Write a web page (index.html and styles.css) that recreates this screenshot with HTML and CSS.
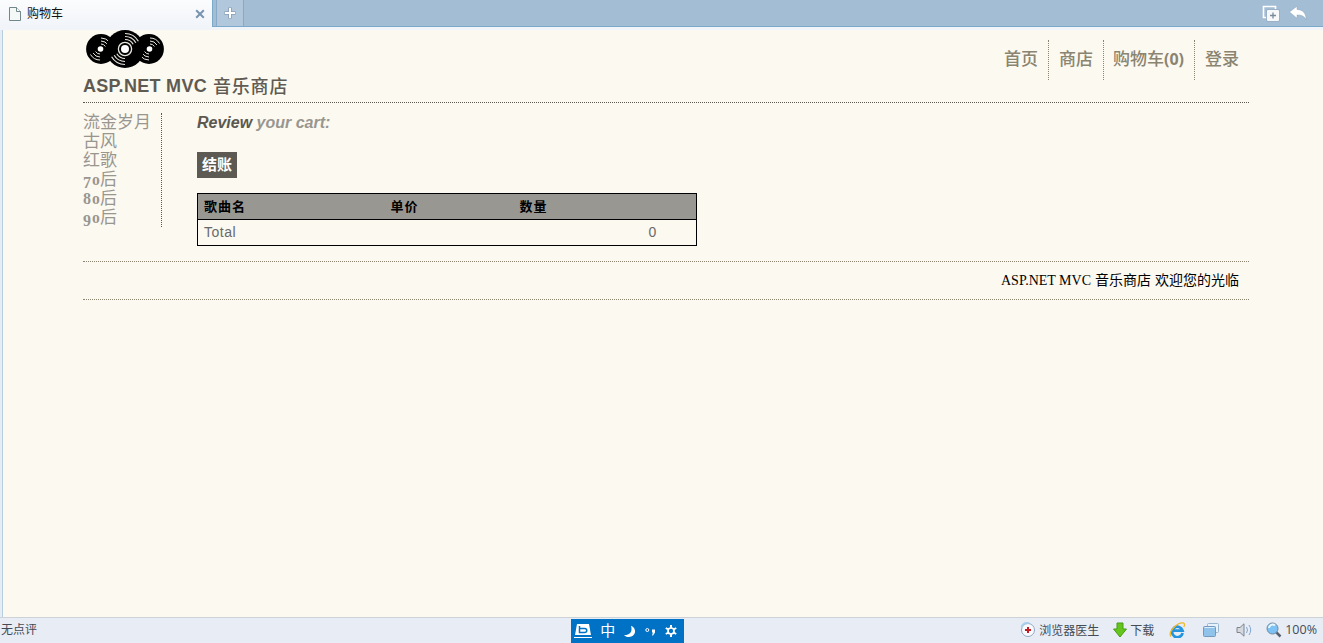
FILE: index.html
```html
<!DOCTYPE html>
<html lang="zh-CN">
<head>
<meta charset="utf-8">
<title>购物车</title>
<link rel="stylesheet" href="styles.css">
</head>
<body>
<div class="window">
  <div class="tabstrip">
    <div class="tab">
      <svg class="tab-icon" width="14" height="16" viewBox="0 0 14 16"><path d="M1.500 1.500h7l4 4v9h-11z" fill="#f4f8f7" stroke="#71878a"/><path d="M8.500 1.500v4h4" fill="#fff" stroke="#71878a"/></svg>
      <span class="tab-title">购物车</span>
      <svg class="tab-close" width="10" height="10" viewBox="0 0 10 10"><path d="M1.200 1.200l7.600 7.600M8.800 1.200L1.200 8.800" stroke="#7894b0" stroke-width="2"/></svg>
    </div>
    <div class="new-tab"><svg width="12" height="12" viewBox="0 0 12 12"><path d="M6 .5v11M.5 6h11" stroke="#8b9fb4" stroke-width="3.600"/><path d="M6 1v10M1 6h10" stroke="#fff" stroke-width="2"/></svg></div>
    <div class="strip-actions">
      <svg width="18" height="17" viewBox="0 0 18 17"><path d="M4 12.500H1.500v-11h12V4" fill="none" stroke="#fff" stroke-width="1.600"/><rect x="4.500" y="4.500" width="13" height="12" rx="1.500" fill="#f6f8fa" stroke="#7896b2" stroke-width=".6"/><path d="M11 7.500v6M8 10.500h6" stroke="#788b9c" stroke-width="1.300"/></svg>
      <svg width="18" height="14" viewBox="0 0 18 14"><path d="M.5 6L8 .3v3.200c5.500 0 9 3.500 9.200 10-2-3.500-5-4.800-9.200-4.600v3.300z" fill="#fff" stroke="#7f9bb5" stroke-width=".4"/></svg>
    </div>
  </div>
  <div class="toolbar-edge"></div>
  <div class="viewport">
    <div class="page">
      <header class="header">
        <div class="brand">
          <svg class="logo" width="80" height="40" viewBox="0 0 80 40">
            <g fill="none" stroke="#e9e7df" stroke-width="1">
              <circle cx="16" cy="20" r="14.900" fill="#000" stroke="none"/>
              <path d="M16 15a5 5 0 0 1 4.400 2.500M16 12a8 8 0 0 1 6.900 4M16 9a11 11 0 0 1 8.500 4M15 25a5 5 0 0 1-4.400-2.500M15 28a8 8 0 0 1-6.900-4M15 31a11 11 0 0 1-9.500-5.500"/>
              <circle cx="64" cy="20" r="14.900" fill="#000" stroke="none"/>
              <path d="M65 15a5 5 0 0 1 4.400 2.500M65 12a8 8 0 0 1 6.900 4M65 9a11 11 0 0 1 9.500 5.500M64 25a5 5 0 0 1-4.400-2.500M64 28a8 8 0 0 1-6.900-4M64 31a11 11 0 0 1-8.500-4"/>
              <circle cx="40" cy="20" r="19" fill="#000" stroke="none"/>
              <circle cx="40" cy="20" r="6.600" stroke-width="1.300"/>
              <path stroke-width="1.200" d="M40 10.500a9.500 9.500 0 0 1 8.200 4.700M40 7.500a12.500 12.500 0 0 1 10.800 6.200M40 4.500a15.500 15.500 0 0 1 13.400 7.700M40 29.500a9.500 9.500 0 0 1-8.200-4.700M40 32.500a12.500 12.500 0 0 1-10.800-6.200M40 35.500a15.500 15.500 0 0 1-13.400-7.700"/>
            </g>
            <g fill="#fff"><circle cx="15.500" cy="20" r="2.800"/><circle cx="64.500" cy="20" r="2.800"/><circle cx="40" cy="20" r="4"/></g>
          </svg>
          <h1 class="site-title"><span class="latin">ASP.NET MVC</span><span class="site-cn">音乐商店</span></h1>
        </div>
        <nav class="nav">
          <a class="nav-item">首页</a><a class="nav-item">商店</a><a class="nav-item nav-cart">购物车<span class="count">(0)</span></a><a class="nav-item nav-last">登录</a>
        </nav>
      </header>
      <div class="main">
        <ul class="categories">
          <li>流金岁月</li><li>古风</li><li>红歌</li>
          <li><span class="old low">7</span><span class="old zero">0</span>后</li>
          <li><span class="old">8</span><span class="old zero">0</span>后</li>
          <li><span class="old low">9</span><span class="old zero">0</span>后</li>
        </ul>
        <section class="cart">
          <h3 class="cart-title"><em>Review</em> your cart:</h3>
          <a class="checkout">结账</a>
          <table class="cart-table">
            <thead><tr><th class="col-name">歌曲名</th><th class="col-price">单价</th><th class="col-count">数量</th><th></th></tr></thead>
            <tbody><tr><td class="total">Total</td><td></td><td></td><td>0</td></tr></tbody>
          </table>
        </section>
      </div>
      <footer class="footer"><span class="footer-latin">ASP.NET MVC</span><span class="footer-cn">音乐商店</span><span class="footer-cn">欢迎您的光临</span></footer>
    </div>
  </div>
  <div class="statusbar">
    <div class="status-left">无点评</div>
    <div class="ime">
      <svg width="18" height="16" viewBox="0 0 18 16"><path d="M3 1h12l2 11H1z" fill="#fff"/><path d="M0 14.500h18" stroke="#fff"/><path d="M5.500 3v6.500h5c3 0 3-4 0-4h-5" fill="none" stroke="#0072c6" stroke-width="1.500"/></svg>
      <span class="ime-lang">中</span>
      <svg width="13" height="13" viewBox="0 0 13 13"><path d="M8 .8c5 2 5.500 8 1 10.500-3 1.500-6.500.6-8-1.300 6 .5 8.800-3.500 7-9.200z" fill="#fff"/></svg>
      <svg width="11" height="9" viewBox="0 0 11 9"><circle cx="2.300" cy="3" r="1.500" fill="none" stroke="#fff"/><path d="M7 2.500h3v3L8 8.500H7l.9-3H7z" fill="#fff"/></svg>
      <svg width="14" height="14" viewBox="0 0 14 14"><path d="M7 1v12M1.800 4l10.400 6M12.200 4L1.800 10" stroke="#fff" stroke-width="2"/><circle cx="7" cy="7" r="3" fill="#0072c6" stroke="#fff" stroke-width="1.700"/></svg>
    </div>
    <div class="status-tools">
      <span class="tool doctor"><svg width="16" height="16" viewBox="0 0 16 16"><circle cx="8" cy="8" r="6.500" fill="#f7fbff" stroke="#91a9c0"/><path d="M1.500 5A7 7 0 0 1 9 1" fill="none" stroke="#a9d0ee" stroke-width="2"/><path d="M8 5v6M5 8h6" stroke="#c51d22" stroke-width="2"/></svg>浏览器医生</span>
      <span class="tool download"><svg width="14" height="16" viewBox="0 0 14 16"><path d="M4 1h6v6h3.500L7 15 .5 7H4z" fill="#66c51c" stroke="#469d14"/></svg>下载</span>
      <svg class="ie" width="17" height="16" viewBox="0 0 17 16"><path d="M13.600 11A5.300 5.300 0 1 1 13.500 8.600H4.500" fill="none" stroke="#2394dd" stroke-width="2.800"/><path d="M2 14.500C-1.500 10 9-.5 14.500 1c1.500.5 1.200 2.500.3 4" fill="none" stroke="#efb82c" stroke-width="1.300"/></svg>
      <svg class="windows" width="17" height="14" viewBox="0 0 17 14"><rect x="4.500" y=".5" width="11" height="9" rx="1" fill="#e8f2fa" stroke="#9ab6cf"/><rect x=".5" y="3.500" width="12" height="10" rx="1" fill="#8fc3ea" stroke="#7598bc"/><path d="M1.500 4.500h10" stroke="#dcecf8"/></svg>
      <svg class="sound" width="16" height="14" viewBox="0 0 16 14"><path d="M1 4.500h3l4-3.700v12.400L4 9.500H1z" fill="#d5d9df" stroke="#7e858f"/><path d="M10.500 4q2 3 0 6M13 2q3.400 5 0 10" fill="none" stroke="#7fa6d5"/></svg>
      <span class="tool zoom"><svg width="16" height="16" viewBox="0 0 16 16"><path d="M10 10l4.500 4.500" stroke="#59636f" stroke-width="2.500"/><circle cx="6.500" cy="6.500" r="5.500" fill="#7cc2f5" stroke="#73869b"/><path d="M3 6a3.600 3.600 0 0 1 6-2.500" fill="none" stroke="#e9f7ff" stroke-width="2"/></svg><span class="percent">100%</span></span>
    </div>
  </div>
</div>
</body>
</html>
```

FILE: styles.css
```css
* { box-sizing: border-box; }
body { margin: 0; font-family: "Liberation Sans", "Noto Sans CJK SC", sans-serif; }
svg { display: block; flex: none; }
.window { width: 1323px; height: 643px; display: flex; flex-direction: column; overflow: hidden; background: #fcf9f0; }

.tabstrip { height: 27px; display: flex; flex: none; background: #a3bdd4; border-bottom: 1px solid #7ca8ca; }
.tab { width: 213px; height: 27px; display: flex; align-items: center; padding: 0 7px 0 8px; background: linear-gradient(#fbfcfd, #f1f4f9); border-right: 1px solid #7ca8ca; }
.tab-title { margin: -2px 0 0 5px; font: 12px/16px "Noto Sans CJK SC", sans-serif; color: #111; flex: 1; }
.new-tab { width: 28px; height: 26px; margin-left: 3px; display: flex; align-items: center; justify-content: center; background: #b1c7dc; border: solid #89a9c4; border-width: 0 1px; }
.strip-actions { margin-left: auto; display: flex; align-items: center; gap: 9px; padding: 0 16px 0 0; }
.toolbar-edge { height: 3px; flex: none; background: #f1f5fa; }

.viewport { height: 587px; flex: none; margin-left: 2px; padding-left: 80px; border-left: 1px solid #b5cee2; box-shadow: -2px 0 #e6edf5; }
.page { width: 1166px; }
.header { height: 73px; display: flex; justify-content: space-between; border-bottom: 1px dotted #5b5850; }
.logo { margin: -1px 0 0 2px; }
.site-title { margin: 6px 0 0; height: 22px; display: flex; gap: 6px; align-items: center; font-size: 18px; line-height: 22px; color: #5f5b53; white-space: nowrap; }
.latin { letter-spacing: .3px; }
.site-cn { margin-top: -3px; font: 500 18px/22px "Noto Sans CJK SC", sans-serif; letter-spacing: .8px; }
.nav { display: flex; height: 40px; margin-top: 10px; padding-right: 10px; }
.nav-item { padding: 0 10px; border-right: 1px dotted #8a8471; font: 500 17px/36px "Noto Sans CJK SC", sans-serif; color: #8a8471; white-space: nowrap; }
.nav-cart { width: 91px; padding: 0 9px; }
.count { font: bold 16px/36px "Noto Sans", sans-serif; }
.nav-last { padding-right: 0; border: 0; }

.main { display: flex; height: 158px; padding-top: 10px; }
.categories { width: 79px; height: 114px; margin: 0; padding: 0; list-style: none; border-right: 1px dotted #5b5850; font: 17px/16px "Noto Sans CJK SC", sans-serif; color: #999690; }
.categories li { height: 19px; white-space: nowrap; }
.old { display: inline-block; width: 9px; line-height: 12px; font-family: "Liberation Serif", serif; font-weight: bold; font-size: 16px; }
.low { vertical-align: -3px; }
.zero { width: 8px; font-size: 12px; transform: scaleX(1.3); transform-origin: left; }
.cart { width: 500px; margin-left: 35px; }
.cart-title { margin: 0; font: italic bold 16px/19px "Liberation Sans", sans-serif; color: #999690; }
.cart-title em { color: #5b5850; }
.checkout { display: block; width: 40px; height: 26px; margin-top: 20px; background: #5c5a52; color: #fff; font: bold 15px/24px "Noto Sans CJK SC", sans-serif; text-align: center; }
.cart-table { width: 500px; margin-top: 15px; table-layout: fixed; border-collapse: collapse; border: 1px solid #000; font-size: 14px; color: #696969; }
.cart-table th, .cart-table td { height: 26px; padding: 0 0 2px 6px; line-height: 18px; text-align: left; }
.cart-table thead tr { background: #999791; border-bottom: 1px solid #000; }
.cart-table th { color: #000; font: bold 13px/18px "Noto Sans CJK SC", sans-serif; letter-spacing: 1px; }
.total { letter-spacing: .5px; }
.col-name { width: 187px; }
.col-price, .col-count { width: 129px; }

.footer { height: 39px; display: flex; justify-content: flex-end; gap: 4px; padding-right: 10px; border: dotted #8a8471; border-width: 1px 0; font: 14px/35px "Noto Sans CJK SC", sans-serif; color: #000; }
.footer-latin { font-family: "Liberation Serif", serif; line-height: 37px; }

.statusbar { height: 26px; flex: none; display: flex; justify-content: space-between; border-top: 1px solid #cbd3d8; background: #e8ecf4; font: 12px/22px "Noto Sans CJK SC", sans-serif; color: #444b55; }
.status-left { width: 571px; padding-left: 1px; white-space: nowrap; }
.ime { width: 113px; height: 24px; margin-top: 1px; padding: 0 6px 0 3px; display: flex; align-items: center; justify-content: space-between; background: #0072c6; color: #fff; }
.ime-lang { margin-top: -3px; font-size: 15px; line-height: 21px; }
.status-tools { width: 639px; height: 24px; display: flex; justify-content: flex-end; align-items: center; padding-right: 6px; }
.tool { display: flex; align-items: center; gap: 3px; white-space: nowrap; }
.download { margin-left: 14px; }
.ie { margin-left: 15px; }
.windows { margin-left: 17px; }
.sound { margin-left: 16px; }
.zoom { margin-left: 14px; }
.percent { font: 12.5px/22px "Open Sans", sans-serif; }
```
